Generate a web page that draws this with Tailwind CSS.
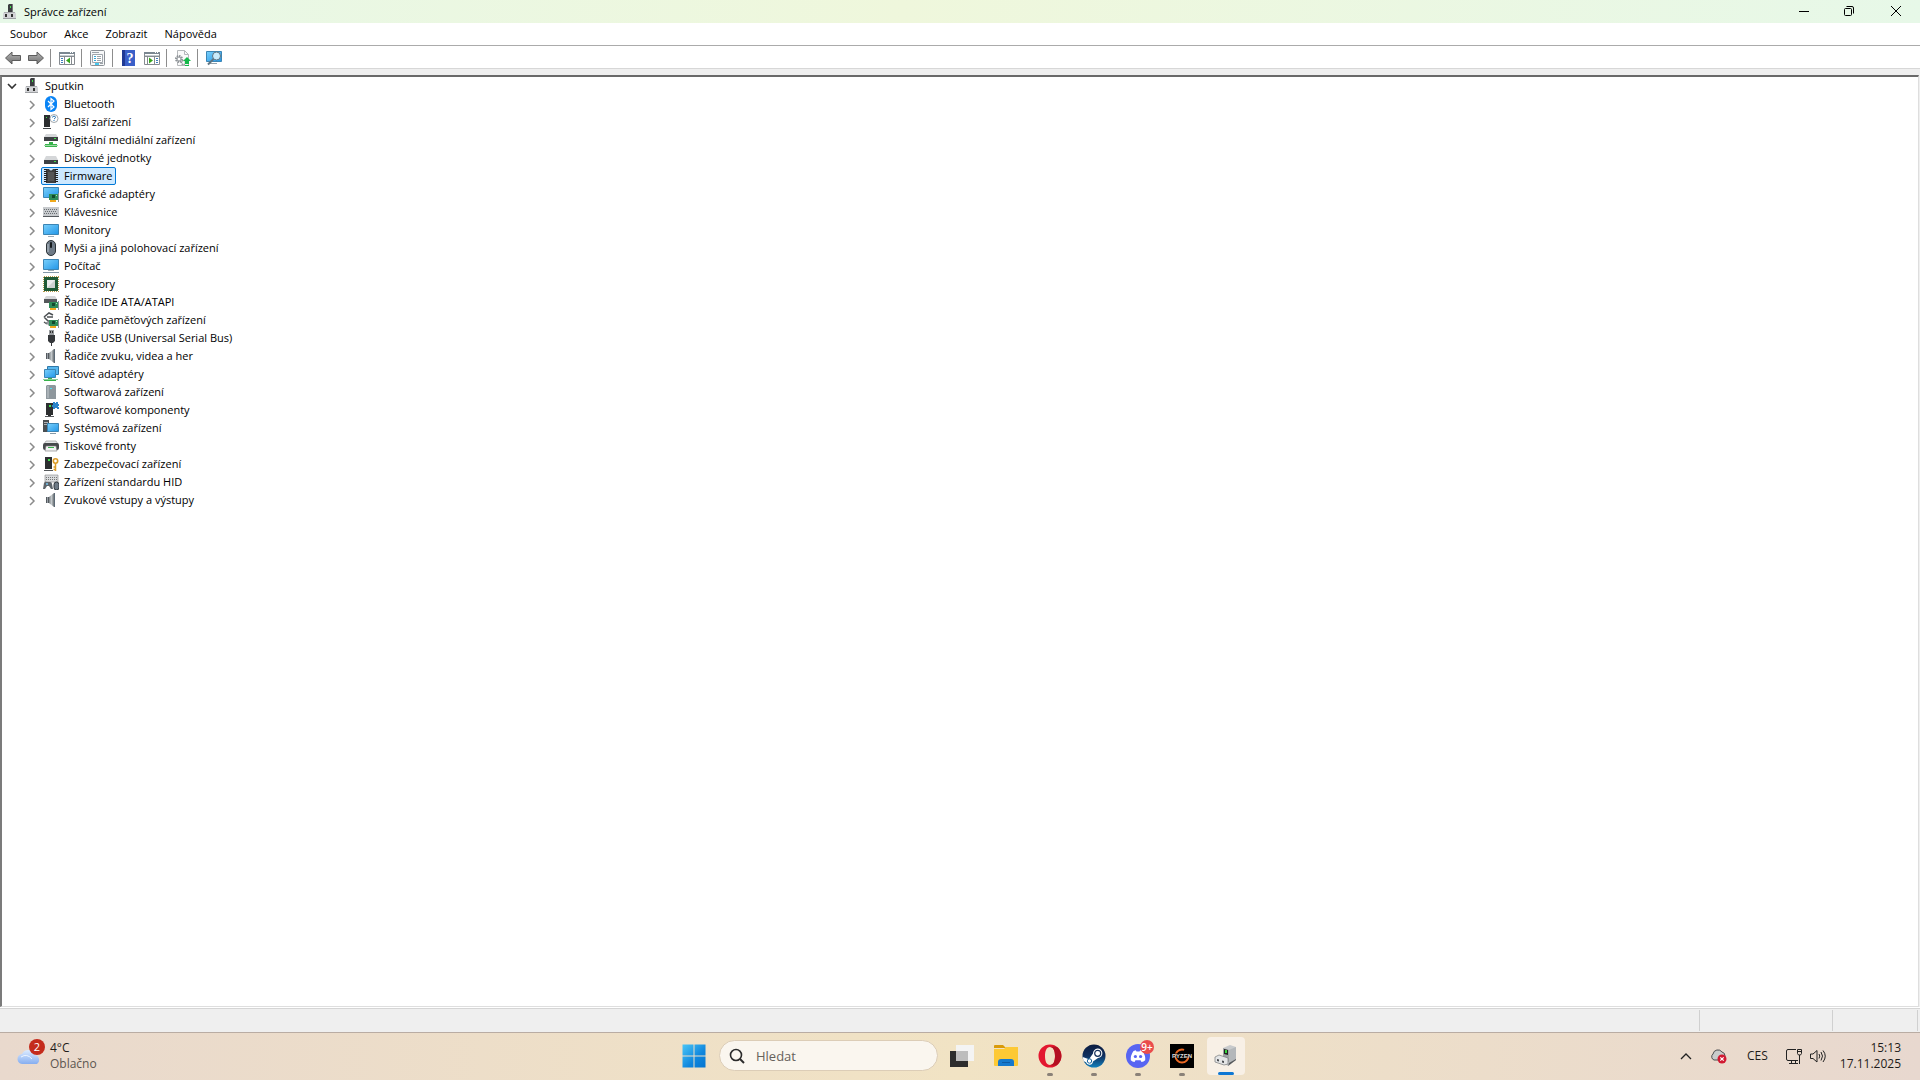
<!DOCTYPE html>
<html lang="cs">
  <head>
    <meta charset="UTF-8" />
    <meta name="viewport" content="width=device-width, initial-scale=1.0" />
    <title>Správce zařízení</title>
    <script src="https://cdn.jsdelivr.net/npm/@tailwindcss/browser@4"></script>
  </head>
  <body class="flex h-screen flex-col overflow-hidden bg-white font-['Open_Sans','Noto_Sans',sans-serif] text-[11px] leading-[18px] text-black">
    <!-- shared icons; display: none would switch the gradients off -->
    <svg class="absolute h-0 w-0" aria-hidden="true">
      <defs>
        <linearGradient id="screen" x1="0" y1="0" x2="1" y2="1">
          <stop offset="0" stop-color="#7ad0fb" />
          <stop offset="1" stop-color="#2196e8" />
        </linearGradient>
        <linearGradient id="metal" x1="0" y1="0" x2="1" y2="0">
          <stop offset="0" stop-color="#7d8488" />
          <stop offset=".5" stop-color="#c3c8cb" />
          <stop offset="1" stop-color="#6b7276" />
        </linearGradient>
        <linearGradient id="arrow" x1="0" y1="0" x2="0" y2="1">
          <stop offset="0" stop-color="#b5b5b5" />
          <stop offset="1" stop-color="#707070" />
        </linearGradient>
        <symbol id="devmgr" viewBox="0 0 16 16">
          <path d="M7 0h4v8H6V1z" fill="#3b3d40" />
          <path d="M10 0h1v8h-1z" fill="#77797b" />
          <path d="M8 2h1v2H8z" fill="#3fe04a" />
          <path d="M2 8h11l1 2v5H1v-5z" fill="#d3d4d7" />
          <path d="M2 8h11v1H2z" fill="#a9abae" />
          <path d="M3 10h2v3H3zM9 10h2v3H9z" fill="#333" />
          <path d="M1 14h13v1H1z" fill="#9ea1a4" />
        </symbol>
        <symbol id="card" viewBox="0 0 10 9">
          <path d="M0 1h9v6H0z" fill="#2e8b57" />
          <path d="M9 0h1v9H9z" fill="#8d9396" />
          <path d="M3 2h3v3H3z" fill="#134a2c" />
          <path d="M7 2h1v1H7z" fill="#a6e8b5" />
          <path d="M1 7h6v2H1z" fill="#f0a91c" />
        </symbol>
        <symbol id="speaker" viewBox="0 0 16 16">
          <path d="M3 5h3v6H3z" fill="#54595e" />
          <path d="M6 5l5-4v14l-5-4z" fill="url(#metal)" />
          <path d="M11 1h1v14h-1z" fill="#5d6a76" />
          <path d="M4 5h1v6H4z" fill="#99a1a8" />
        </symbol>
        <symbol id="closed" viewBox="0 0 8 10">
          <path d="M2 1l4 4-4 4" fill="none" stroke="#8b8b8b" stroke-width="1.500" />
        </symbol>
      </defs>
    </svg>

    <header class="flex h-[23px] shrink-0 items-center bg-linear-to-r from-[#e7f8e8] via-[#eff7dc] via-47% to-[#e7f8e8] pl-[2px]">
      <svg class="size-4"><use href="#devmgr" /></svg>
      <h1 class="ml-[6px] flex-1">Správce zařízení</h1>
      <button aria-label="Minimalizovat" class="flex h-full w-[46px] items-center justify-center pb-[2px]">
        <svg class="h-3 w-3" viewBox="0 0 12 12"><path d="M1 6.500h10" stroke="#000" /></svg>
      </button>
      <button aria-label="Obnovit" class="flex h-full w-[44px] items-center justify-center pb-[2px]">
        <svg class="h-3 w-3" viewBox="0 0 12 12" fill="none" stroke="#000"><rect x="1.500" y="3.500" width="7" height="7" rx="1" /><path d="M3.500 1.500H9q1.500 0 1.500 1.500v5.500" /></svg>
      </button>
      <button aria-label="Zavřít" class="flex h-full w-[49px] items-center justify-center pb-[2px]">
        <svg class="h-3 w-3" viewBox="0 0 12 12"><path d="M1 1l10 10M11 1L1 11" stroke="#000" /></svg>
      </button>
    </header>

    <nav class="flex h-[23px] shrink-0 items-center gap-[17px] border-b border-[#ababab] pl-[10px]">
      <button>Soubor</button>
      <button>Akce</button>
      <button>Zobrazit</button>
      <button>Nápověda</button>
    </nav>

    <div role="toolbar" class="flex h-[23px] shrink-0 items-center border-b border-[#d7d7d7] pt-[2px] pl-[5px]">
      <button aria-label="Zpět">
        <svg class="size-4" viewBox="1 0 16 16"><path d="M1.500 8L8 2v3.500h8.500v5H8V14z" fill="url(#arrow)" stroke="#5c5c5c" /></svg>
      </button>
      <button aria-label="Vpřed" class="ml-[7px]">
        <svg class="size-4" viewBox="1 0 16 16"><path d="M16.500 8L10 2v3.500H1.500v5H10V14z" fill="url(#arrow)" stroke="#5c5c5c" /></svg>
      </button>
      <span class="mr-2 ml-[6px] h-[18px] w-px bg-[#8d8d8d]"></span>
      <button aria-label="Zobrazit strom konzoly">
        <svg class="size-4" viewBox="1 0 16 16">
          <path d="M1.500 2.500h15v12h-15z" fill="#fff" stroke="#868b90" />
          <path d="M1 2h16v2H1z" fill="#7b8791" /><path d="M12 2h1v1h-1zM14 2h1v1h-1z" fill="#fff" />
          <path d="M2 5h14v1H2z" fill="#c6ccd2" />
          <path d="M6.500 6.500v8M13.500 6.500v8M1.500 6.500h15" stroke="#868b90" fill="none" />
          <path d="M3 8h2v1H3zM3 10h2v1H3zM3 12h2v1H3z" fill="#3f7dbd" />
          <path d="M12 7.500v6L8 10.500z" fill="#35a51c" />
        </svg>
      </button>
      <span class="mr-2 ml-[6px] h-[18px] w-px bg-[#8d8d8d]"></span>
      <button aria-label="Vlastnosti">
        <svg class="size-4" viewBox="1 0 16 16">
          <rect x="1.500" y=".5" width="14" height="15" rx="1" fill="#f6f7f8" stroke="#8b9096" />
          <path d="M3.500 4.500h10v8h-10z" fill="#fff" stroke="#a0a6ac" />
          <path d="M3 2h7v1H3z" fill="#9ca3a9" /><path d="M5 6h2v1H5zM5 8h2v1H5zM5 10h2v1H5z" fill="#35a7d8" />
          <path d="M8 6h4v1H8zM8 8h4v1H8zM8 10h4v1H8z" fill="#9ca3a9" />
          <path d="M6 13h4v2H6z" fill="#46c8ef" /><path d="M11 13h3v1h-3z" fill="#9ca3a9" />
        </svg>
      </button>
      <span class="mr-2 ml-[6px] h-[18px] w-px bg-[#8d8d8d]"></span>
      <button aria-label="Nápověda">
        <svg class="size-4" viewBox="0 0 16 16">
          <path d="M1 0h13v16H1z" fill="#3a5fc8" /><path d="M1 0h3v16H1z" fill="#203a94" />
          <text x="9" y="13" font-size="14" font-weight="700" font-family="Liberation Serif, serif" text-anchor="middle" fill="#fff">?</text>
        </svg>
      </button>
      <button aria-label="Podokno akcí" class="ml-[7px]">
        <svg class="size-4" viewBox="1 0 16 16">
          <path d="M1.500 2.500h15v12h-15z" fill="#fff" stroke="#868b90" />
          <path d="M1 2h16v2H1z" fill="#7b8791" /><path d="M12 2h1v1h-1zM14 2h1v1h-1z" fill="#fff" />
          <path d="M2 5h14v1H2z" fill="#c6ccd2" />
          <path d="M4.500 6.500v8M11.500 6.500v8M1.500 6.500h15" stroke="#868b90" fill="none" />
          <path d="M13 8h2v1h-2zM13 10h2v1h-2zM13 12h2v1h-2z" fill="#3f7dbd" />
          <path d="M6 7.500v6l4-3z" fill="#35a51c" />
        </svg>
      </button>
      <span class="mr-2 ml-[6px] h-[18px] w-px bg-[#8d8d8d]"></span>
      <button aria-label="Aktualizovat ovladač">
        <svg class="size-4" viewBox="1 0 16 16">
          <path d="M3.500.5h7l4 4v11h-11z" fill="#fafafa" stroke="#b5b8bb" /><path d="M10.500.5v4h4" fill="none" stroke="#b5b8bb" />
          <circle cx="5" cy="9" r="3" fill="#fff" stroke="#8e9397" stroke-width="2" stroke-dasharray="1.500 .8" />
          <circle cx="5" cy="9" r="2" fill="none" stroke="#8e9397" />
          <circle cx="9.500" cy="12.500" r="2" fill="#fff" stroke="#8e9397" stroke-width="1.500" stroke-dasharray="1.200 .5" />
          <path d="M13 7l4 4h-2v3h-4v-3H9z" fill="#16b84a" /><path d="M11 15h4v1h-4z" fill="#16b84a" />
        </svg>
      </button>
      <span class="mr-2 ml-[6px] h-[18px] w-px bg-[#8d8d8d]"></span>
      <button aria-label="Vyhledat změny hardwaru">
        <svg class="size-4" viewBox="1 0 16 16">
          <path d="M1.500 1.500h15v10h-15z" fill="url(#screen)" stroke="#3c85b4" /><path d="M5 13h7v1H5z" fill="#95a3ad" />
          <circle cx="11.500" cy="6" r="4" fill="#c9ebfc" stroke="#5f7482" />
          <path d="M8.500 9L3 14.500" stroke="#5f7482" stroke-width="2" />
        </svg>
      </button>
    </div>

    <main class="flex min-h-0 flex-1 flex-col bg-[#efefef] pt-[6px]">
      <div class="mr-px flex-1 overflow-hidden border-t-2 border-r border-b border-l-2 border-t-[#696969] border-r-[#dedede] border-b-[#dedede] border-l-[#7b7b7b] bg-white">
        <div class="flex h-[18px] items-center pl-1">
          <button aria-label="Sbalit" class="flex w-3 justify-center"><svg class="h-2 w-[10px]" viewBox="0 0 10 8"><path d="M1 2l4 4 4-4" fill="none" stroke="#333" stroke-width="1.600" /></svg></button>
          <svg class="ml-[6px] size-4"><use href="#devmgr" /></svg>
          <span class="ml-[5px]">Sputkin</span>
        </div>
        <ul id="tree"></ul>
      </div>
    </main>

    <footer class="mt-px flex h-[24px] shrink-0 border-t border-[#d5d5d5] bg-[#efefef] py-px">
      <div class="flex-1 border-r border-[#d0d0d0]"></div>
      <div class="w-[133px] border-r border-[#d0d0d0]"></div>
      <div class="w-[85px] border-r border-[#d0d0d0]"></div>
      <div class="w-[2px]"></div>
    </footer>

    <div class="grid h-[48px] shrink-0 grid-cols-[1fr_auto_1fr] border-t border-[#b9aca3] bg-linear-to-r from-[#e9d9cd] via-[#f1e3c4] to-[#e8d8cf] pb-[2px] text-[12px] leading-[16px] text-[#1f1c1a]">
      <button class="flex items-center gap-2 justify-self-start pl-[17px] text-left">
        <span class="relative">
          <svg class="h-6 w-[25px]" viewBox="0 0 25 24"><defs><linearGradient id="cloud" x2="0" y2="1"><stop stop-color="#dcebff" /><stop offset="1" stop-color="#86aef0" /></linearGradient></defs><path d="M6 20a5 5 0 0 1-1-10 7 7 0 0 1 13 1 5 5 0 0 1 2 9z" fill="url(#cloud)" /><path d="M4 13q6-4 11 2" fill="none" stroke="#edf5ff" /></svg>
          <span class="absolute -top-[5px] left-3 flex size-4 items-center justify-center rounded-full bg-[#c42b1c] text-[11px] text-white">2</span>
        </span>
        <span class="flex flex-col">
          <span>4°C</span>
          <span class="text-[#5c5650]">Oblačno</span>
        </span>
      </button>

      <div class="flex items-center pr-[3px]">
        <button aria-label="Start" class="flex w-11 justify-center">
          <svg class="size-6" viewBox="0 0 24 24"><defs><linearGradient id="win" gradientUnits="userSpaceOnUse" x2="24" y2="24"><stop stop-color="#4cc8f8" /><stop offset=".6" stop-color="#0f86dd" /><stop offset="1" stop-color="#0574d0" /></linearGradient></defs><path d="M.5.500h11v11H.5zM12.500.500h11v11h-11zM.5 12.500h11v11H.5zM12.500 12.500h11v11h-11z" fill="url(#win)" /></svg>
        </button>
        <label class="ml-[3px] flex h-[31px] w-[219px] items-center gap-[11px] rounded-full border border-[#dccdb7] bg-[#faf6ef] pl-[9px]">
          <svg class="size-4" viewBox="0 0 16 16" fill="none" stroke="#2b2b2b" stroke-width="1.600"><circle cx="7" cy="7" r="5.500" /><path d="M11 11l4 4" stroke-width="2" /></svg>
          <input type="text" aria-label="Hledat" placeholder="Hledat" class="w-36 bg-transparent text-[13px] outline-none placeholder:text-[#66615b]" />
        </label>
        <button aria-label="Zobrazení úloh" class="ml-[2px] flex w-11 justify-center">
          <svg class="size-6" viewBox="0 0 24 24"><path d="M0 7h18v16H0z" fill="#2d2d2d" /><path d="M6 1h18v16H6z" fill="#f4f4f4" /><path d="M6 7h12v10H6z" fill="#bdbdbd" /></svg>
        </button>
        <button aria-label="Průzkumník souborů" class="flex w-11 justify-center">
          <svg class="size-6" viewBox="0 0 24 24"><path d="M0 2q0-1 1-1h8l3 3H0z" fill="#d99a0a" /><path d="M0 5h10l2-2h12v18q0 1-1 1H1q-1 0-1-1z" fill="#fdc935" /><path d="M4 22v-4q0-3 3-3h10q3 0 3 3v4z" fill="#1579ce" /><path d="M8 18h8v1H8z" fill="#0e5ba5" /></svg>
        </button>
        <button aria-label="Opera" class="relative flex w-11 justify-center">
          <svg class="size-6" viewBox="0 0 24 24"><path fill-rule="evenodd" d="M12 .5a11.500 11.500 0 1 0 0 23 11.500 11.500 0 1 0 0-23zM12 3c3.500 0 5 4 5 9s-1.500 9-5 9-5-4-5-9 1.500-9 5-9z" fill="#e3172f" /><path d="M12 3q4-1 7 0a11.500 11.500 0 0 1 0 18q-3 1-7 0c3.500 0 5-4 5-9s-1.500-9-5-9z" fill="#b31022" /></svg>
          <span class="absolute -bottom-[8px] h-[3px] w-[6px] rounded-full bg-[#8a8178]"></span>
        </button>
        <button aria-label="Steam" class="relative flex w-11 justify-center">
          <svg class="size-6" viewBox="0 0 24 24"><defs><linearGradient id="steam" x2="0" y2="1"><stop stop-color="#0c1c40" /><stop offset=".5" stop-color="#10305f" /><stop offset="1" stop-color="#1381bd" /></linearGradient></defs><circle cx="12" cy="12" r="11.500" fill="url(#steam)" /><path d="M.7 13l6.300 2.300L11 9.500a4.700 4.700 0 1 1 5 4.500l-5 3.500a3.600 3.600 0 0 1-7 .8L1.500 17z" fill="#fff" /><circle cx="15.700" cy="9.300" r="3" fill="#fff" stroke="#16325c" stroke-width="1.200" /><circle cx="7.500" cy="17" r="2.200" fill="none" stroke="#1a649c" /></svg>
          <span class="absolute -bottom-[8px] h-[3px] w-[6px] rounded-full bg-[#8a8178]"></span>
        </button>
        <button aria-label="Discord" class="relative flex w-11 justify-center">
          <svg class="size-6" viewBox="0 0 24 24"><circle cx="12" cy="12" r="12" fill="#5865f2" /><path d="M7.500 7l2.300-.8.7 1.200h3l.7-1.200 2.300.8q3.200 4.500 2.700 9.300-1.700 1.400-3.700 1.700l-1-1.800h-5L8.500 18q-2-.3-3.700-1.700Q4.300 11.500 7.500 7z" fill="#fff" /><circle cx="9.400" cy="12.500" r="1.600" fill="#5865f2" /><circle cx="14.600" cy="12.500" r="1.600" fill="#5865f2" /></svg>
          <span class="absolute -top-[4px] right-[6px] flex size-[14px] items-center justify-center rounded-full bg-[#ea4c4c] text-[10px] font-semibold text-white">9+</span>
          <span class="absolute -bottom-[8px] h-[3px] w-[6px] rounded-full bg-[#8a8178]"></span>
        </button>
        <button aria-label="Ryzen Master" class="relative flex w-11 justify-center">
          <svg class="size-6" viewBox="0 0 24 24"><path d="M0 0h24v24H0z" /><circle cx="12" cy="12" r="6.500" fill="none" stroke="#ee6a24" stroke-width="2" stroke-dasharray="32 9" /><path d="M0 9h24v5H0z" fill="#000" fill-opacity=".5" /><text x="12" y="14" text-anchor="middle" font-size="6" font-weight="700" font-family="Liberation Sans, sans-serif" fill="#ddd">RYZEN</text></svg>
          <span class="absolute -bottom-[8px] h-[3px] w-[6px] rounded-full bg-[#8a8178]"></span>
        </button>
        <button aria-label="Správce zařízení" class="relative ml-[3px] flex h-[38px] w-[38px] items-center justify-center rounded bg-[#f8f0e6]">
          <svg class="size-6" viewBox="0 0 24 24"><path d="M9 4l7-3 6 2v13l-8 6-5-3z" fill="#c8cacc" /><path d="M9 4l6 2v12l-6-2z" fill="#9fa2a5" /><path d="M10 5l4 1v5l-4-1z" fill="#222" /><path d="M11 6h2v3h-2z" fill="#37d43d" /><path d="M15 6l7-3v12l-7 5z" fill="#b4b7ba" /><path d="M15 19l7-4v1l-8 6z" fill="#54575a" /><path d="M1 13l4-2 9 3v6l-4 1-9-3z" fill="#e4e5e6" stroke="#777a7d" stroke-width=".7" /><path d="M3 15l2 .6v2L3 17zM8 16.500l2 .6v2l-2-.6z" fill="#494c50" /></svg>
          <span class="absolute bottom-0 h-[3px] w-4 rounded-full bg-[#0f78d4]"></span>
        </button>
      </div>

      <div class="flex items-center justify-self-end pr-[19px]">
        <button aria-label="Skryté ikony" class="mr-[18px]"><svg class="h-3 w-3" viewBox="0 0 12 12"><path d="M1 9l5-5 5 5" fill="none" stroke="#222" stroke-width="1.300" /></svg></button>
        <button aria-label="OneDrive" class="mr-5"><svg class="h-4 w-[17px]" viewBox="0 0 17 16"><path d="M4 12a3.500 3.500 0 0 1-1-6 5 5 0 0 1 9-2 4 4 0 0 1 3 4v4z" fill="#c9cccc" stroke="#4b4d4f" /><circle cx="12" cy="11" r="4.500" fill="#d11a32" /><path d="M10.300 9.300l3.400 3.400M13.700 9.300l-3.400 3.400" stroke="#fff" stroke-width="1.200" /></svg></button>
        <button class="mr-[18px]">CES</button>
        <button aria-label="Síť a hlasitost" class="mr-[14px] flex gap-2">
          <svg class="size-4" viewBox="0 0 16 16" fill="none" stroke="#222"><path d="M10 1.500H2q-1.500 0-1.500 1.500v8q0 1.500 1.500 1.500h10M3 15.500h9M5.500 12.500v3M9.500 12.500v3M13.500 7v9" /><path d="M11.500 1.500h4v4l-1 1.500h-2l-1-1.500z" /><path d="M11.500 3.500h4" /></svg>
          <svg class="size-4" viewBox="0 0 16 16" fill="none" stroke="#222"><path d="M.5 6v4.500H3l4 3.500V2.500L3 6zM9 6q1.500 2 0 4.500M11 4q3 4 0 8.500M13 2.500q4.500 5.500 0 11.500" /></svg>
        </button>
        <button class="flex flex-col items-end">
          <span>15:13</span>
          <span>17.11.2025</span>
        </button>
      </div>
    </div>

    <script>
      const pc = `<path d="M3 1h7v12H3z" fill="#2c2e30"/><path d="M6 3h2v2H6z" fill="#3fe04a"/><path d="M2 14h9v1H2z" fill="#55585b"/><path d="M5 13h3v1H5z" fill="#2c2e30"/>`;
      const drive = `<path d="M3 6h10l2 4H1z" fill="#d5d7d9"/><path d="M1 10h14v4H1z" fill="#3e4144"/><path d="M11 11h2v1h-2z" fill="#3fe04a"/>`;
      const card = `<use href="#card" x="6" y="7" width="10" height="9"/>`;
      const speaker = `<use href="#speaker" width="16" height="16"/>`;

      const devices = [
        ["Bluetooth", `<rect x="2" width="12" height="16" rx="6" fill="#0a84f5"/><path d="M5 5l6 6-3 2.500v-11L11 5l-6 6" fill="none" stroke="#fff" stroke-width="1.200"/>`],
        ["Další zařízení", `<path d="M1 1h6v12H1z" fill="#2c2e30"/><path d="M3 3h1v1H3z" fill="#3fe04a"/><path d="M0 14h8v1H0z" fill="#44474a"/><circle cx="11" cy="4.500" r="4" fill="#fff" stroke="#a3a9ad"/><path d="M9.500 3.500q0-1.300 1.500-1.300t1.500 1.200q0 .8-1.500 1.600M11 6v1" fill="none" stroke="#2777b8"/>`],
        ["Digitální mediální zařízení", `<path d="M3 2h10l2 3H1z" fill="#d5d7d9"/><path d="M1 5h14v4H1z" fill="#3e4144"/><path d="M11 6h2v1h-2z" fill="#3fe04a"/><path d="M6 10h4v2h4v3H2v-3h4z" fill="#37b34a"/><path d="M1 13h14v1H1z" fill="#9fd8a8"/>`],
        ["Diskové jednotky", drive],
        ["Firmware", `<path d="M3 1h3q2 3 4 0h3v14H3z" fill="#3d3d3d"/><path d="M2.500 1v14M13.500 1v14" stroke="#222" stroke-width="3" stroke-dasharray="1 1"/><path d="M5 4h6v9H5z" fill="#555"/>`],
        ["Grafické adaptéry", `<path d="M.5 1.500h15v10H.5z" fill="url(#screen)" stroke="#3c85b4"/>` + card],
        ["Klávesnice", `<path d="M0 3h16v9H0z" fill="#c7cacd"/><path d="M1 5.500h14M2 7.500h12M1 9.500h14" stroke="#686d71" stroke-dasharray="1 1"/><path d="M0 12h16v1H0z" fill="#55595d"/>`],
        ["Monitory", `<path d="M.5 2.500h15v10H.5z" fill="url(#screen)" stroke="#3c85b4"/><path d="M5 14h6v1H5z" fill="#9eabb4"/>`],
        ["Myši a jiná polohovací zařízení", `<rect x="3.500" y=".5" width="9" height="15" rx="4.500" fill="#6e7a86" stroke="#2c3338"/><path d="M5 4v8" stroke="#b9c4cd"/><rect x="7" y="2" width="2" height="6" rx="1" fill="#15191c"/>`],
        ["Počítač", `<path d="M.5 1.500h15v10H.5z" fill="url(#screen)" stroke="#3c85b4"/><path d="M5 12h6v1H5z" fill="#9eabb4"/><path d="M0 14h16v1H0z" fill="#8499a8"/>`],
        ["Procesory", `<path d="M1 1h14v14H1z" fill="#1f5a35"/><path d="M1 .5h15M1 15.500h15M.5 1v15M15.500 1v15" stroke="#b69a4b" stroke-dasharray="1 1"/><path d="M4 4h8v8H4z" fill="#cfd2d0"/><path d="M4 4h8l-8 8z" fill="#ececec"/>`],
        ["Řadiče IDE ATA/ATAPI", `<path d="M3 2h9l2 3H1z" fill="#d5d7d9"/><path d="M1 5h13v4H1z" fill="#55585b"/>` + card],
        ["Řadiče paměťových zařízení", `<path d="M1 5l5-4 4 2M1 5l4 4h3M4 5h6M4 12l-3-2" fill="none" stroke="#4c5053" stroke-width="1.500"/><path d="M2 10l4 4v-4z" fill="#93989c"/>` + card],
        ["Řadiče USB (Universal Serial Bus)", `<path d="M6 0h5v5H6z" fill="#999da0"/><path d="M7 1h1v2H7zM9 1h1v2H9z" fill="#333"/><path d="M5 5h7v6l-2 2H7l-2-2z" fill="#35383b"/><path d="M8 12h1v4H8z" fill="#35383b"/>`],
        ["Řadiče zvuku, videa a her", speaker],
        ["Síťové adaptéry", `<path d="M4.500.5h11v8h-11z" fill="#58b8ef" stroke="#3078a8"/><path d="M1.500 3.500h11v8h-11z" fill="url(#screen)" stroke="#3c85b4"/><path d="M5 12h4v1h4v2H1v-2h4z" fill="#37b34a"/><path d="M0 13.500h15" stroke="#8fd09a"/>`],
        ["Softwarová zařízení", `<path d="M4 1h8l1 1v13H3V2z" fill="#8e979d"/><path d="M4 2h2v12H4z" fill="#a9b1b6"/><path d="M7 4h2v1H7z" fill="#4de0f5"/>`],
        ["Softwarové komponenty", pc + `<path d="M10 0h2v1h1V0h2v2h1v2h-1v1h1v2h-2V6h-2v1h-2V5H9V3h1z" fill="#2a83c9"/>`],
        ["Systémová zařízení", `<path d="M0 0h6v12H0z" fill="#4a4e51"/><path d="M1 2h4v1H1zM1 4h4v1H1z" fill="#adb2b6"/><path d="M4.500 3.500h11v8h-11z" fill="url(#screen)" stroke="#3c85b4"/><path d="M7 13h6v1H7z" fill="#8499a8"/>`],
        ["Tiskové fronty", `<path d="M3 3h10l2 3H1z" fill="#e5e7e8" stroke="#777" stroke-width=".5"/><rect y="5" width="16" height="7" rx="2" fill="#46494c"/><path d="M3 8h10l1 5H2z" fill="#f2f3f4" stroke="#777" stroke-width=".6"/><path d="M5 9h6v1H5z" fill="#37b34a"/>`],
        ["Zabezpečovací zařízení", `<path d="M2 1h7v12H2z" fill="#2c2e30"/><path d="M5 3h2v2H5z" fill="#3fe04a"/><path d="M1 14h9v1H1z" fill="#55585b"/><circle cx="12.500" cy="5" r="2.200" fill="#fff" stroke="#dc9b26" stroke-width="1.600"/><path d="M12.500 7v8M12.500 11h-2M12.500 13.500h-2" fill="none" stroke="#dc9b26" stroke-width="1.500"/>`],
        ["Zařízení standardu HID", `<path d="M2 1h13v7H2z" fill="#d9dbdd" stroke="#888" stroke-width=".6"/><path d="M3 3.500h11M3 5.500h11" stroke="#777" stroke-dasharray="1 1"/><path d="M0 15l1-6q1-2 3-1h3q2 0 2 2l1 5H8l-2-3H4l-2 3z" fill="#5e656b"/><circle cx="4" cy="10" r="1" fill="#79c4ee"/><rect x="11" y="8" width="5" height="8" rx="2.500" fill="#6e7a86" stroke="#2c3338"/>`],
        ["Zvukové vstupy a výstupy", speaker],
      ];

      const selected = "Firmware";
      const tree = document.querySelector("#tree");
      for (const [name, icon] of devices) {
        const look = name === selected
          ? "border-[#0078d7] bg-[#cce8ff]"
          : "border-transparent";
        tree.insertAdjacentHTML("beforeend", `
          <li class="flex h-[18px] items-center pl-6">
            <button aria-label="Rozbalit ${name}" class="flex h-full w-3 items-center justify-center pt-[2px]"><svg class="h-[10px] w-2"><use href="#closed"/></svg></button>
            <button class="ml-[3px] flex h-[18px] items-center gap-[5px] rounded-[2px] border pr-[3px] pl-px ${look}">
              <svg class="h-4 w-4" viewBox="0 0 16 16">${icon}</svg>${name}
            </button>
          </li>`);
      }
    </script>
  </body>
</html>
